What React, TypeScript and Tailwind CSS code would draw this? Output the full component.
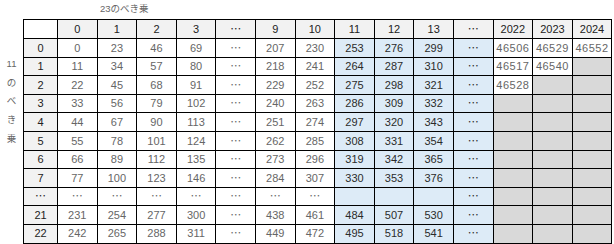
import React from "react";

type Col = { label: string; n?: number; blue?: boolean; year?: boolean };
type Row = { label: string; n?: number };

const cols: Col[] = [
  { label: "0", n: 0 },
  { label: "1", n: 1 },
  { label: "2", n: 2 },
  { label: "3", n: 3 },
  { label: "⋯" },
  { label: "9", n: 9 },
  { label: "10", n: 10 },
  { label: "11", n: 11, blue: true },
  { label: "12", n: 12, blue: true },
  { label: "13", n: 13, blue: true },
  { label: "⋯", blue: true },
  { label: "2022", n: 2022, year: true },
  { label: "2023", n: 2023, year: true },
  { label: "2024", n: 2024, year: true },
];

const rows: Row[] = [
  ...[0, 1, 2, 3, 4, 5, 6, 7].map((n) => ({ label: String(n), n })),
  { label: "⋯" },
  { label: "21", n: 21 },
  { label: "22", n: 22 },
];

const font = { fontFamily: '"Liberation Sans", "Noto Sans CJK JP", sans-serif' };

function DataCell({ row, col }: { row: Row; col: Col }) {
  const base = "flex items-center justify-center text-[11px]";

  if (col.year) {
    const filled = row.n !== undefined && (col.n! - 2022) + row.n <= 2;
    if (!filled) return <div className={`${base} bg-[#d9d9d9]`} />;
    return (
      <div className={`${base} bg-white text-[#666] tracking-[0.5px]`}>
        {23 * col.n! + 11 * row.n!}
      </div>
    );
  }

  if (col.blue) {
    let text = "";
    if (col.n === undefined) text = "⋯";
    else if (row.n !== undefined) text = String(23 * col.n + 11 * row.n);
    return <div className={`${base} bg-[#ddebf7] text-[#2b2b2b]`}>{text}</div>;
  }

  const text =
    row.n === undefined || col.n === undefined
      ? "⋯"
      : String(23 * col.n + 11 * row.n);
  return <div className={`${base} bg-white text-[#666]`}>{text}</div>;
}

export default function App() {
  return (
    <div className="w-[614px] h-[244px] bg-white overflow-hidden" style={font}>
      {/* title */}
      <div className="h-[19px] pl-[100px] flex items-center text-[9.5px] text-[#666]">
        23のべき乗
      </div>

      <div className="flex">
        {/* vertical label */}
        <div className="w-[23px] pt-[36px] flex flex-col items-center text-[9.5px] text-[#666]">
          {["11", "の", "べ", "き", "乗"].map((ch, i) => (
            <div key={i} className="h-[18.6px] flex items-center">
              {ch}
            </div>
          ))}
        </div>

        {/* table */}
        <div className="grid grid-cols-[33px_repeat(14,38.6px)] grid-rows-[18px_repeat(11,17.6px)] gap-px p-px bg-black">
          <div className="bg-white" />
          {cols.map((c, i) => (
            <div
              key={`h${i}`}
              className="bg-[#f2f2f2] flex items-center justify-center text-[11px] text-[#222]"
            >
              {c.label}
            </div>
          ))}

          {rows.map((r, ri) => (
            <React.Fragment key={`r${ri}`}>
              <div className="bg-[#f2f2f2] flex items-center justify-center text-[11px] text-[#222]">
                {r.label}
              </div>
              {cols.map((c, ci) => (
                <DataCell key={`c${ri}-${ci}`} row={r} col={c} />
              ))}
            </React.Fragment>
          ))}
        </div>
      </div>
    </div>
  );
}
